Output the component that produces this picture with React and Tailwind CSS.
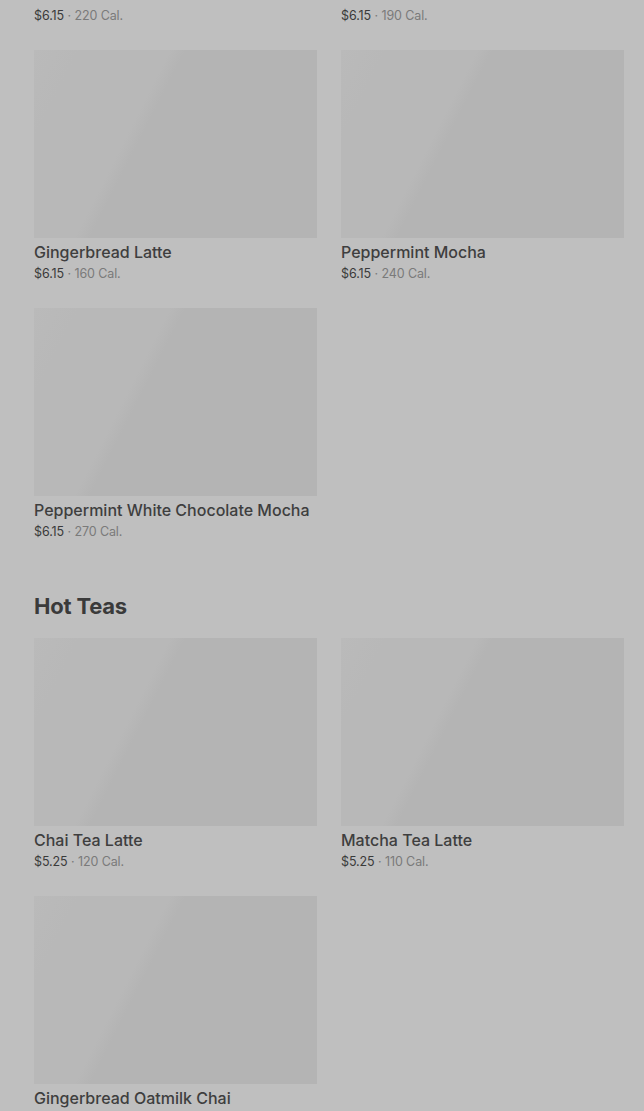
import React from 'react';

const sections = [
  {
    title: null,
    items: [
      { name: 'Caramel Brulée Latte', price: '$6.15', cal: '220 Cal.' },
      { name: 'Chestnut Praline Latte', price: '$6.15', cal: '190 Cal.' },
      { name: 'Gingerbread Latte', price: '$6.15', cal: '160 Cal.' },
      { name: 'Peppermint Mocha', price: '$6.15', cal: '240 Cal.' },
      { name: 'Peppermint White Chocolate Mocha', price: '$6.15', cal: '270 Cal.' },
    ],
  },
  {
    title: 'Hot Teas',
    items: [
      { name: 'Chai Tea Latte', price: '$5.25', cal: '120 Cal.' },
      { name: 'Matcha Tea Latte', price: '$5.25', cal: '110 Cal.' },
      { name: 'Gingerbread Oatmilk Chai', price: '$5.25', cal: '240 Cal.' },
    ],
  },
];

function ProductCard({ name, price, cal }) {
  return (
    <div className="flex flex-col">
      <div className="h-[188px] w-full bg-[linear-gradient(117deg,#bababa_0%,#b8b8b8_12%,#b8b8b8_36%,#b4b4b4_40%,#b4b4b4_100%)]" />
      <p className="mt-0.5 text-[16px] leading-6 font-medium text-[#3e3e3e] whitespace-nowrap">{name}</p>
      <p className="text-[12.5px] leading-5 text-[#7a7a7a] tracking-[-0.1px]">
        <span className="text-[#3a3a3a]">{price}</span> · {cal}
      </p>
    </div>
  );
}

export default function App() {
  return (
    <div className="min-h-screen bg-[#bfbfbf] overflow-hidden" style={{ fontFamily: 'Inter, "Noto Sans", sans-serif' }}>
      <div className="-mt-[208px] pl-[34px] pr-[20px] flex flex-col gap-[50px]">
        {sections.map((s, i) => (
          <section key={i}>
            {s.title && (
              <h2 className="text-[22px] leading-7 font-bold text-[#3a3a3a] mb-[18px] tracking-[-0.2px]">{s.title}</h2>
            )}
            <div className="grid grid-cols-[283px_283px] gap-x-6 gap-y-6">
              {s.items.map((it) => (
                <ProductCard key={it.name} {...it} />
              ))}
            </div>
          </section>
        ))}
      </div>
    </div>
  );
}
